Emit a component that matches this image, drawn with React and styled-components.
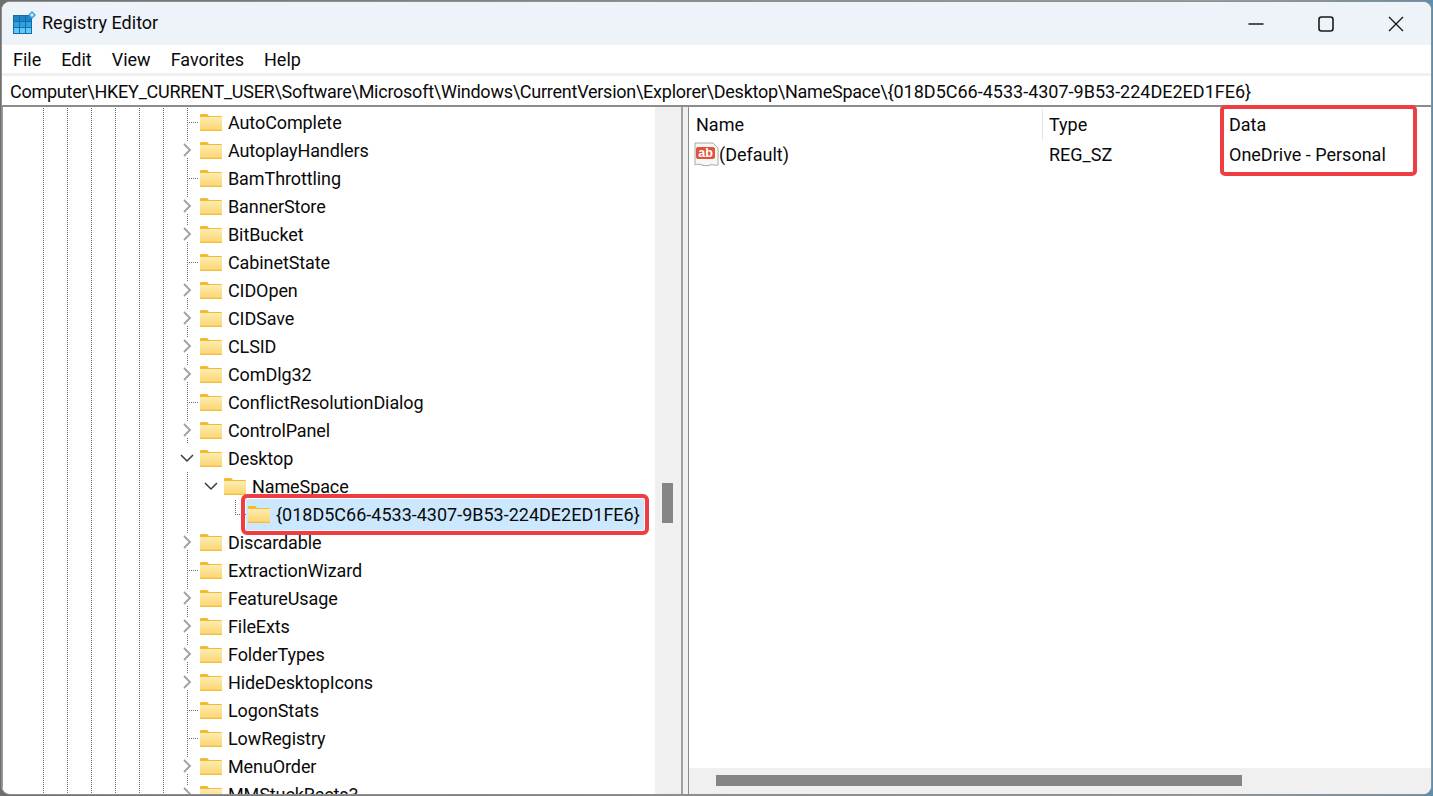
import React from "react";
import styled, { createGlobalStyle, css } from "styled-components";

const GlobalStyle = createGlobalStyle`
  html, body {
    margin: 0;
    padding: 0;
    width: 1433px;
    height: 796px;
    overflow: hidden;
    background: linear-gradient(90deg, #6f6f6f 0%, #8d8d8d 50%, #9a9a9a 85%, #5f8fae 100%);
    font-family: Roboto, "Noto Sans", sans-serif;
  }
  *, *::before, *::after { box-sizing: border-box; }
`;

const dots = css`
  background-image: linear-gradient(to bottom, #6a6a6a 50%, transparent 50%);
  background-size: 1px 2px;
  background-repeat: repeat-y;
  background-position: 11px 0;
`;

const Page = styled.div`
  padding: 2px;
  height: 796px;
`;

const Window = styled.div`
  height: 792px;
  display: flex;
  flex-direction: column;
  border-radius: 8px;
  overflow: hidden;
  background: #fff;
  box-shadow: 0 0 0 1px #8f8f8f;
  color: #0a0a0a;
  font-size: 18px;
`;

const TitleBar = styled.div`
  height: 43px;
  flex: none;
  display: flex;
  align-items: center;
  justify-content: space-between;
  padding-left: 11px;
  background: #eef3fa;
`;

const TitleLeft = styled.div`
  display: flex;
  align-items: center;
  gap: 5px;
  padding-bottom: 2px;
`;

const WinButtons = styled.div`
  display: flex;
  padding-top: 1px;
`;

const WinButton = styled.div`
  width: 70px;
  height: 42px;
  display: flex;
  align-items: center;
  justify-content: center;
`;

const MenuBar = styled.div`
  height: 28px;
  flex: none;
  display: flex;
  align-items: center;
  gap: 20px;
  padding-left: 11px;
  background: #fff;
`;

const AddressBar = styled.div`
  height: 34px;
  flex: none;
  display: flex;
  align-items: center;
  padding: 1px 0 0 8px;
  background: #fff;
  border-top: 3px solid #f0f0f0;
  border-bottom: 2px solid #8c8c8c;
  white-space: nowrap;
`;

const AddressPath = styled.span`
  letter-spacing: -0.25px;
`;

const Panes = styled.div`
  flex: 1;
  min-height: 0;
  display: flex;
`;

const TreePane = styled.div`
  width: 679px;
  flex: none;
  display: flex;
  border-left: 1px solid #9a9a9a;
`;

const Tree = styled.div`
  flex: 1;
  min-width: 0;
  padding: 1px 0 0 29px;
  overflow: hidden;
`;

const Row = styled.div`
  height: 28px;
  display: flex;
  align-items: center;
  white-space: nowrap;
`;

const Guide = styled.span`
  width: 24px;
  height: 28px;
  flex: none;
  ${dots}
`;

const Blank = styled.span`
  width: 24px;
  height: 28px;
  flex: none;
`;

const Expander = styled.span`
  width: 24px;
  height: 28px;
  flex: none;
  display: flex;
  align-items: center;
  padding-left: 4px;
  ${(p) => p.$line && dots}
`;

const Branch = styled.span`
  width: 24px;
  height: 28px;
  flex: none;
  position: relative;
  ${(p) => !p.$last && dots}

  &::before {
    content: "";
    position: absolute;
    left: 11px;
    top: 14px;
    width: 12px;
    height: 1px;
    background-image: linear-gradient(to right, #6a6a6a 50%, transparent 50%);
    background-size: 2px 1px;
  }

  ${(p) =>
    p.$last &&
    css`
      &::after {
        content: "";
        position: absolute;
        left: 11px;
        top: 0;
        width: 1px;
        height: 14px;
        background-image: linear-gradient(to bottom, #6a6a6a 50%, transparent 50%);
        background-size: 1px 2px;
      }
    `}
`;

const ChevronBox = styled.span`
  display: flex;
  align-items: center;
  justify-content: center;
  width: 16px;
  height: 16px;
  background: #fff;
`;

const Label = styled.span`
  margin-left: 6px;
  letter-spacing: -0.1px;
`;

const SelectedWrap = styled.span`
  position: relative;
  display: flex;
  align-items: center;
  gap: 6px;
  height: 31px;
  margin-left: -2px;
  padding: 0 4px 0 2px;
  background: #cce8ff;

  &::after {
    content: "";
    position: absolute;
    inset: -5px;
    border: 4px solid #ee3e42;
    border-radius: 6px;
  }
`;

const VScroll = styled.div`
  width: 26px;
  flex: none;
  padding: 376px 7px 0 7px;
  background: #f0f0f0;
`;

const VThumb = styled.div`
  width: 11px;
  height: 40px;
  background: #858585;
`;

const Splitter = styled.div`
  width: 8px;
  flex: none;
  background: #f0f0f0;
  border-left: 2px solid #a0a0a0;
  border-right: 1px solid #8c8c8c;
`;

const ListPane = styled.div`
  flex: 1;
  min-width: 0;
  display: flex;
  flex-direction: column;
`;

const List = styled.div`
  flex: 1;
  min-height: 0;
  display: flex;
  padding-top: 2px;
`;

const Column = styled.div`
  width: ${(p) => p.$w}px;
  flex: none;
  display: flex;
  flex-direction: column;
`;

const DataColumn = styled(Column)`
  position: relative;
  align-self: flex-start;

  &::after {
    content: "";
    position: absolute;
    left: 0;
    top: -4px;
    width: 197px;
    height: 71px;
    border: 4px solid #ee3e42;
    border-radius: 5px;
  }
`;

const HeadCell = styled.div`
  height: 31px;
  display: flex;
  align-items: center;
  padding-left: ${(p) => p.$pad}px;
  ${(p) => p.$divide && "box-shadow: inset 1px 0 0 #e5e5e5;"}
`;

const Cell = styled.div`
  height: 29px;
  display: flex;
  align-items: center;
  white-space: nowrap;
  padding-left: ${(p) => p.$pad}px;
`;

const HScroll = styled.div`
  height: 26px;
  flex: none;
  padding: 7px 0 0 27px;
  background: #f0f0f0;
`;

const HThumb = styled.div`
  width: 526px;
  height: 11px;
  background: #858585;
`;

const cellFill = ["#1f86c6", "#2ea3e2", "#63c8f6"];

const RegIcon = () => (
  <svg width="24" height="23" viewBox="0 0 24 23">
    <rect x="0" y="4" width="19" height="19" fill="#156da8" />
    {[1, 7, 13].map((x) =>
      [5, 11, 17].map((y, i) => (
        <rect key={`${x}-${y}`} x={x} y={y} width="5" height="5" fill={cellFill[i]} />
      ))
    )}
    <path d="M19 0l4 4-4 4-4-4z" fill="#3f9fd8" />
    <path d="M19 2l2 2-2 2-2-2z" fill="#cfeafa" />
  </svg>
);

const MinIcon = () => (
  <svg width="16" height="16" viewBox="0 0 16 16">
    <path d="M0.5 8h15" stroke="#1a1a1a" strokeWidth="1.3" />
  </svg>
);

const MaxIcon = () => (
  <svg width="16" height="16" viewBox="0 0 16 16">
    <rect x="1" y="1" width="14" height="14" rx="2.5" fill="none" stroke="#1a1a1a" strokeWidth="1.6" />
  </svg>
);

const CloseIcon = () => (
  <svg width="16" height="16" viewBox="0 0 16 16">
    <path d="M1 1l14 14M15 1L1 15" stroke="#1a1a1a" strokeWidth="1.4" />
  </svg>
);

const Chevron = ({ open }) => (
  <svg width="14" height="14" viewBox="0 0 14 14">
    {open ? (
      <path d="M1 4l6 6 6-6" fill="none" stroke="#3c3c3c" strokeWidth="1.5" />
    ) : (
      <path d="M3 1l6 6-6 6" fill="none" stroke="#a0a0a0" strokeWidth="1.8" />
    )}
  </svg>
);

const Folder = () => (
  <svg width="22" height="17" viewBox="0 0 22 17" style={{ flex: "none" }}>
    <defs>
      <linearGradient id="fold" x1="0" y1="0" x2="0" y2="1">
        <stop offset="0" stopColor="#fdebb0" />
        <stop offset="0.85" stopColor="#fcd978" />
        <stop offset="1" stopColor="#f3b632" />
      </linearGradient>
    </defs>
    <path d="M0 1a1 1 0 0 1 1-1h6l2 2h-1l-1 1H0z" fill="#f6b82a" />
    <rect x="0" y="2" width="22" height="15" rx="0.5" fill="#f3bb3a" />
    <rect x="0" y="3" width="22" height="14" fill="url(#fold)" />
  </svg>
);

const StringIcon = () => (
  <svg width="25" height="25" viewBox="0 0 25 25" style={{ flex: "none" }}>
    <path
      d="M1 1h18l5 5v17c-3 1-5-1-8 0s-5 1-8 0-5-1-7 0z"
      fill="#f7f7f7"
      stroke="#a8a8a8"
      strokeWidth="1"
    />
    <rect x="2" y="5" width="19" height="12" rx="2" fill="#e2543a" />
    <text x="11.5" y="15" textAnchor="middle" fontSize="12.5" fontWeight="700" fontFamily="Liberation Sans, sans-serif" fill="#fff">
      ab
    </text>
  </svg>
);

const rows = [
  ["AutoComplete", "leaf"],
  ["AutoplayHandlers", "closed"],
  ["BamThrottling", "leaf"],
  ["BannerStore", "closed"],
  ["BitBucket", "closed"],
  ["CabinetState", "leaf"],
  ["CIDOpen", "closed"],
  ["CIDSave", "closed"],
  ["CLSID", "closed"],
  ["ComDlg32", "closed"],
  ["ConflictResolutionDialog", "leaf"],
  ["ControlPanel", "closed"],
  ["Desktop", "open"],
  ["NameSpace", "child"],
  ["{018D5C66-4533-4307-9B53-224DE2ED1FE6}", "selected"],
  ["Discardable", "closed"],
  ["ExtractionWizard", "leaf"],
  ["FeatureUsage", "closed"],
  ["FileExts", "closed"],
  ["FolderTypes", "closed"],
  ["HideDesktopIcons", "closed"],
  ["LogonStats", "leaf"],
  ["LowRegistry", "leaf"],
  ["MenuOrder", "closed"],
  ["MMStuckRects3", "closed"],
];

const guides = [0, 1, 2, 3, 4, 5];

const TreeRow = ({ name, kind }) => (
  <Row>
    {guides.map((g) => (
      <Guide key={g} />
    ))}
    {kind === "leaf" && <Branch />}
    {kind === "closed" && (
      <Expander $line>
        <ChevronBox>
          <Chevron />
        </ChevronBox>
      </Expander>
    )}
    {kind === "open" && (
      <Expander>
        <Chevron open />
      </Expander>
    )}
    {kind === "child" && (
      <>
        <Guide />
        <Expander>
          <Chevron open />
        </Expander>
      </>
    )}
    {kind === "selected" && (
      <>
        <Guide />
        <Blank />
        <Branch $last />
        <SelectedWrap>
          <Folder />
          <span>{name}</span>
        </SelectedWrap>
      </>
    )}
    {kind !== "selected" && (
      <>
        <Folder />
        <Label>{name}</Label>
      </>
    )}
  </Row>
);

export default function App() {
  return (
    <>
      <GlobalStyle />
      <Page>
        <Window>
          <TitleBar>
            <TitleLeft>
              <RegIcon />
              <span>Registry Editor</span>
            </TitleLeft>
            <WinButtons>
              <WinButton>
                <MinIcon />
              </WinButton>
              <WinButton>
                <MaxIcon />
              </WinButton>
              <WinButton>
                <CloseIcon />
              </WinButton>
            </WinButtons>
          </TitleBar>
          <MenuBar>
            <span>File</span>
            <span>Edit</span>
            <span>View</span>
            <span>Favorites</span>
            <span>Help</span>
          </MenuBar>
          <AddressBar>
            <AddressPath>Computer\HKEY_CURRENT_USER\Software\Microsoft\Windows\CurrentVersion\Explorer\Desktop\NameSpace\</AddressPath>
            <span>{"{018D5C66-4533-4307-9B53-224DE2ED1FE6}"}</span>
          </AddressBar>
          <Panes>
            <TreePane>
              <Tree>
                {rows.map(([name, kind]) => (
                  <TreeRow key={name} name={name} kind={kind} />
                ))}
              </Tree>
              <VScroll>
                <VThumb />
              </VScroll>
            </TreePane>
            <Splitter />
            <ListPane>
              <List>
                <Column $w={353}>
                  <HeadCell $pad={7}>Name</HeadCell>
                  <Cell $pad={5}>
                    <StringIcon />
                    <span>(Default)</span>
                  </Cell>
                </Column>
                <Column $w={178}>
                  <HeadCell $pad={7} $divide>Type</HeadCell>
                  <Cell $pad={7}>REG_SZ</Cell>
                </Column>
                <DataColumn $w={190}>
                  <HeadCell $pad={9}>Data</HeadCell>
                  <Cell $pad={9}>OneDrive - Personal</Cell>
                </DataColumn>
              </List>
              <HScroll>
                <HThumb />
              </HScroll>
            </ListPane>
          </Panes>
        </Window>
      </Page>
    </>
  );
}
